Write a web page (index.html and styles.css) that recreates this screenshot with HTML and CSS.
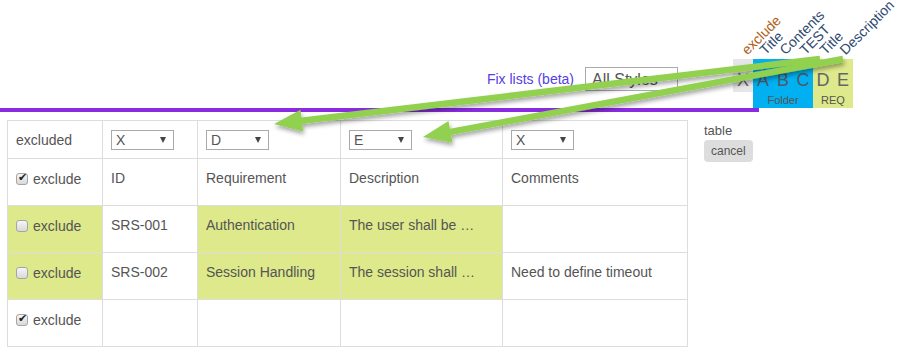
FILE: index.html
```html
<!DOCTYPE html>
<html lang="en">
  <head>
    <meta charset="UTF-8" />
    <meta name="viewport" content="width=device-width, initial-scale=1.0" />
    <title>Import Mapping</title>
    <link rel="stylesheet" href="styles.css">
  </head>
  <body>
    <div class="toolbar">
      <div class="tools">
        <a class="fix-link" href="#">Fix lists (beta)</a>
        <span class="pick pick-styles">
          <select class="style-select"><option>All Styles</option></select>
        </span>
      </div>
      <div class="legend">
        <div class="group">
          <div class="labels">
            <div class="cap"><span class="cap-ex">exclude</span></div>
          </div>
          <div class="box box-x">
            <div class="letters"><span>X</span></div>
          </div>
        </div>
        <div class="group">
          <div class="labels">
            <div class="cap"><span>Title</span></div>
            <div class="cap"><span>Contents</span></div>
            <div class="cap"><span>TEST</span></div>
          </div>
          <div class="box box-folder">
            <div class="letters"><span>A</span><span>B</span><span>C</span></div>
            <div class="group-name">Folder</div>
          </div>
        </div>
        <div class="group">
          <div class="labels">
            <div class="cap"><span>Title</span></div>
            <div class="cap"><span>Description</span></div>
          </div>
          <div class="box box-req">
            <div class="letters"><span>D</span><span>E</span></div>
            <div class="group-name">REQ</div>
          </div>
        </div>
      </div>
    </div>
    <div class="rule"></div>

    <div class="content">
      <table class="grid">
        <colgroup>
          <col style="width: 95px" />
          <col style="width: 95px" />
          <col style="width: 143px" />
          <col style="width: 162px" />
          <col style="width: 185px" />
        </colgroup>
        <tr class="map">
          <td>excluded</td>
          <td><span class="pick"><select><option>X</option></select></span></td>
          <td><span class="pick"><select><option>D</option></select></span></td>
          <td><span class="pick"><select><option>E</option></select></span></td>
          <td><span class="pick"><select><option>X</option></select></span></td>
        </tr>
        <tr>
          <td><label><input type="checkbox" checked /> exclude</label></td>
          <td>ID</td>
          <td>Requirement</td>
          <td>Description</td>
          <td>Comments</td>
        </tr>
        <tr>
          <td class="hl"><label><input type="checkbox" /> exclude</label></td>
          <td>SRS-001</td>
          <td class="hl">Authentication</td>
          <td class="hl">The user shall be …</td>
          <td></td>
        </tr>
        <tr>
          <td class="hl"><label><input type="checkbox" /> exclude</label></td>
          <td>SRS-002</td>
          <td class="hl">Session Handling</td>
          <td class="hl">The session shall …</td>
          <td>Need to define timeout</td>
        </tr>
        <tr>
          <td><label><input type="checkbox" checked /> exclude</label></td>
          <td></td>
          <td></td>
          <td></td>
          <td></td>
        </tr>
      </table>
      <div class="side">
        <div>table</div>
        <button class="cancel" type="button">cancel</button>
      </div>
    </div>

    <!-- mapping arrows drawn over the page -->
    <svg class="arrows" width="919" height="357" viewBox="0 0 919 357">
      <defs>
        <filter id="shade" x="-10%" y="-50%" width="120%" height="200%">
          <feDropShadow dx="1" dy="3" stdDeviation="2" flood-color="#000" flood-opacity="0.35" />
        </filter>
      </defs>
      <g fill="#92d050" filter="url(#shade)">
        <polygon points="819.6,55.8 301.4,117.5 300.5,109.8 274,124 303.1,131.6 302.2,123.9 820.4,62.2" />
        <polygon points="842.4,55.8 449.9,128.7 448.5,121.1 423,137 452.5,142.7 451.1,135.1 843.6,62.2" />
      </g>
    </svg>
  </body>
</html>
```

FILE: styles.css
```css
body {
  margin: 0;
  font-family: "Liberation Sans", Arial, sans-serif;
  color: #555;
  position: relative;
}
.toolbar {
  display: flex;
  justify-content: flex-end;
  align-items: flex-end;
  height: 108px;
  padding-right: 66px;
}
.tools {
  display: flex;
  align-items: center;
  gap: 11px;
  margin-bottom: 17px;
  margin-right: 55px;
}
.fix-link {
  color: #5540e6;
  text-decoration: none;
  font-size: 14px;
}
.pick {
  position: relative;
  display: inline-block;
}
/* little triangle drawn over the select, on the right */
.pick::after {
  content: "";
  position: absolute;
  right: 8px;
  top: 7px;
  border-style: solid;
  border-width: 6px 3.5px 0;
  border-color: #444 transparent transparent;
  pointer-events: none;
}
.pick select {
  appearance: none;
  width: 63px;
  height: 20px;
  padding: 0 0 0 4px;
  border: 1px solid #aaa;
  border-radius: 0;
  background: #fff;
  color: #555;
  font-family: inherit;
  font-size: 14px;
  display: block;
}
.pick-styles::after {
  top: 11px;
  right: 9px;
  border-width: 2px 1.5px 0;
  border-color: #999 transparent transparent;
}
.pick .style-select {
  width: 93px;
  height: 24px;
  padding-left: 6px;
  font-size: 16px;
  border-color: #aaa;
}
.legend {
  display: flex;
  align-items: flex-start;
}
.group {
  display: flex;
  flex-direction: column;
}
.labels {
  display: flex;
  height: 59px;
}
.cap {
  width: 20px;
  display: flex;
  align-items: flex-end;
}
.cap span {
  width: 0;
  white-space: nowrap;
  margin: 0 0 2px 14px;
  font-size: 14px;
  line-height: 14px;
  color: #2e4a6e;
  transform: rotate(-45deg);
  transform-origin: 0 100%;
}
.cap .cap-ex {
  color: #b0601a;
  margin-left: 16px;
}
.box-x {
  background-color: #e6e6e6;
}
.box-folder {
  background-color: #00b0f0;
}
.box-req {
  background-color: #dde98a;
}
.letters {
  display: flex;
  align-items: flex-end;
  height: 33px;
}
.letters span {
  width: 20px;
  text-align: center;
  font-size: 18px;
  line-height: 24px;
  color: #666;
}
.box-folder .letters span {
  color: #4d5a66;
}
.group-name {
  height: 16px;
  line-height: 16px;
  font-size: 11px;
  text-align: center;
  color: #555;
}
.rule {
  width: 759px;
  height: 4px;
  background-color: #8a2be2;
}
.content {
  display: flex;
  align-items: flex-start;
  margin-top: 8px;
  padding-left: 7px;
}
.grid {
  border-collapse: collapse;
  table-layout: fixed;
  width: 680px;
  font-size: 14px;
}
.grid tr {
  height: 47px;
}
.grid td {
  border: 1px solid #ddd;
  padding: 9px 8px 0;
  line-height: 20px;
  vertical-align: top;
  white-space: nowrap;
  overflow: hidden;
}
.grid tr.map {
  height: 38px;
}
.grid tr.map td {
  padding: 0 8px;
  vertical-align: middle;
}
.grid td.hl {
  background-color: #dde98a;
}
.grid label {
  display: flex;
  align-items: center;
  gap: 5px;
  padding-top: 1px;
}
input[type="checkbox"] {
  appearance: none;
  position: relative;
  width: 12px;
  height: 12px;
  margin: 0;
  border: 1px solid #a5a5a5;
  border-radius: 3px;
  background: linear-gradient(#f6f6f6, #d9d9d9);
}
input[type="checkbox"]:checked::after {
  content: "\2714";
  position: absolute;
  left: 1px;
  top: -3px;
  font-size: 11px;
  color: #222;
}
.side {
  margin-left: 16px;
  padding-top: 3px;
  font-size: 13px;
  line-height: 16px;
}
.cancel {
  margin-top: 1px;
  height: 22px;
  padding: 0 7px;
  border: none;
  border-radius: 4px;
  background-color: #ddd;
  color: #555;
  font-family: inherit;
  font-size: 12px;
}
.arrows {
  position: absolute;
  top: 0;
  left: 0;
  pointer-events: none;
}
```
